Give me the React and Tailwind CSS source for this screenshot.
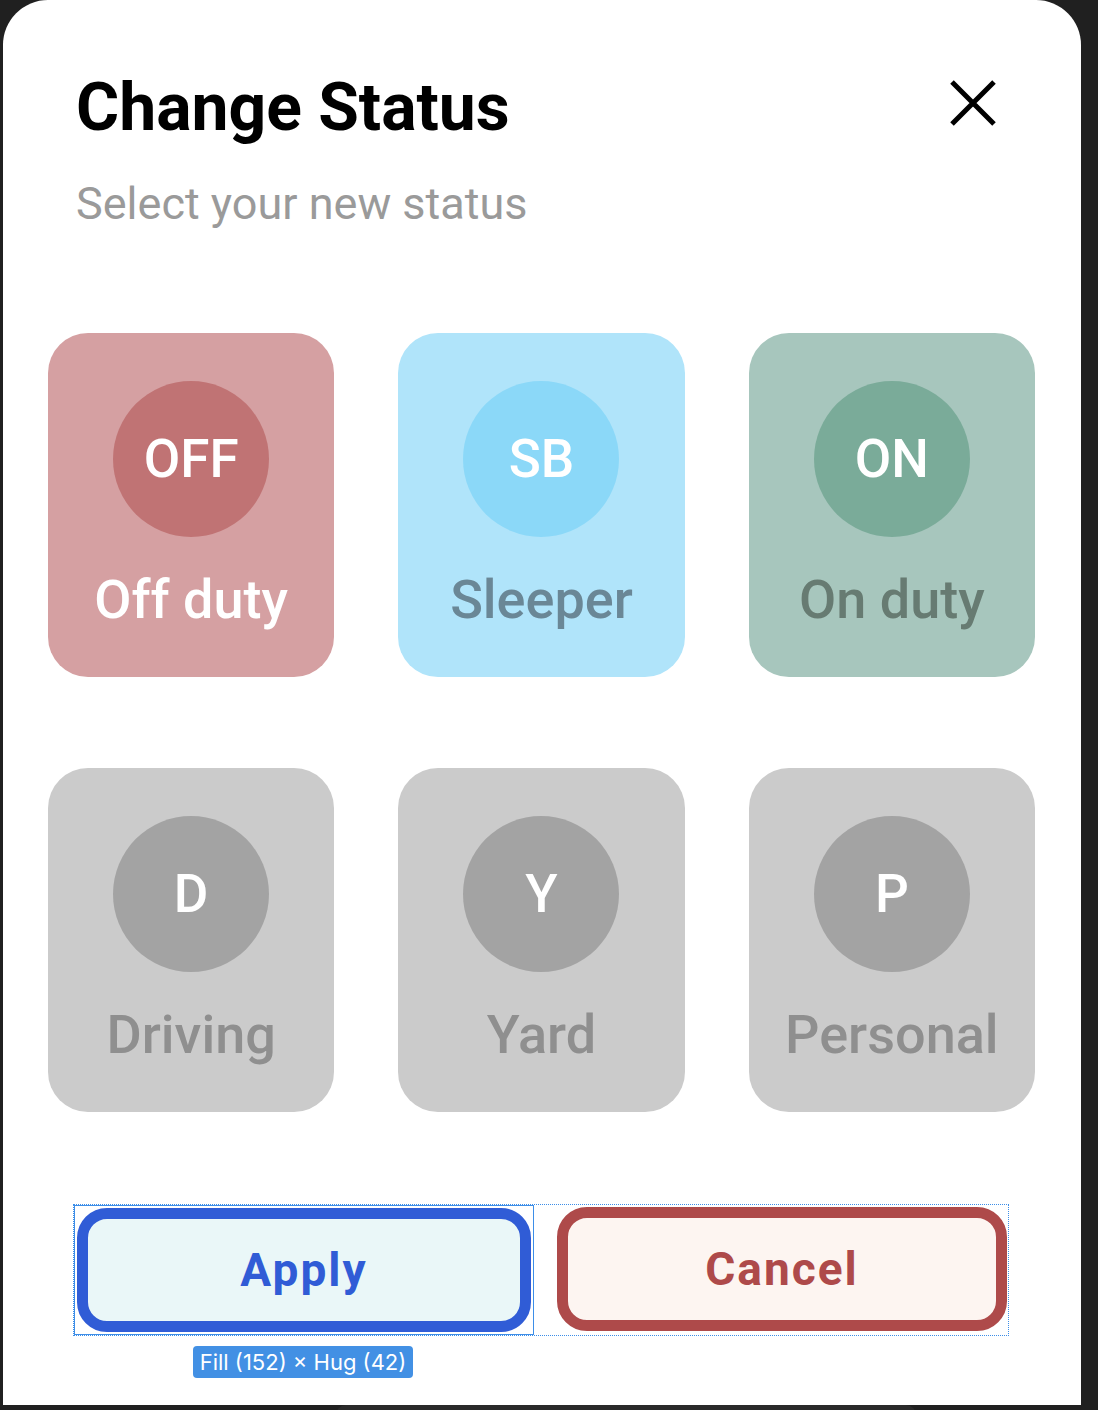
const statuses = [
  { code: "OFF", label: "Off duty", card: "bg-[#d5a0a2]", dot: "bg-[#c07374]", text: "text-white" },
  { code: "SB", label: "Sleeper", card: "bg-[#b0e4fa]", dot: "bg-[#8bd8f8]", text: "text-[#6a8796]" },
  { code: "ON", label: "On duty", card: "bg-[#a7c6bd]", dot: "bg-[#7aab99]", text: "text-[#677b72]" },
  { code: "D", label: "Driving", card: "bg-[#cbcbcb]", dot: "bg-[#a3a3a3]", text: "text-[#8f8f8f]" },
  { code: "Y", label: "Yard", card: "bg-[#cbcbcb]", dot: "bg-[#a3a3a3]", text: "text-[#8f8f8f]" },
  { code: "P", label: "Personal", card: "bg-[#cbcbcb]", dot: "bg-[#a3a3a3]", text: "text-[#8f8f8f]" },
];

function StatusCard({ s }) {
  return (
    <div className={`${s.card} h-[344px] rounded-[40px] flex flex-col items-center pt-[48px]`}>
      <div className={`${s.dot} w-[156px] h-[156px] rounded-full flex items-center justify-center text-white text-[53px] font-medium leading-none`}>
        {s.code}
      </div>
      <div className={`${s.text} mt-[37px] text-[54px] leading-[52px] font-medium`}>{s.label}</div>
    </div>
  );
}

export default function App() {
  return (
    <div className="bg-[#202020] h-[1410px] w-[1098px] overflow-hidden font-['Roboto',sans-serif]">
      <div className="ml-[3px] w-[1078px] h-[1405px] bg-white rounded-t-[45px] flex flex-col">
        {/* Header */}
        <div className="pl-[73px] pr-[85px] pt-[72px] flex justify-between items-start">
          <div>
            <h1 className="text-[66px] leading-[72px] font-bold text-black">Change Status</h1>
            <p className="mt-[34px] text-[45px] leading-[52px] text-[#9a9a9a]">Select your new status</p>
          </div>
          <svg width="46" height="46" viewBox="0 0 46 46" className="mt-[8px]">
            <path d="M2 2 L44 44 M44 2 L2 44" stroke="black" strokeWidth="5" />
          </svg>
        </div>

        {/* Status grid */}
        <div className="mt-[103px] pl-[45px] pr-[46px] grid grid-cols-3 gap-x-[64px] gap-y-[91px]">
          {statuses.map((s) => (
            <StatusCard key={s.code} s={s} />
          ))}
        </div>

        {/* Buttons */}
        <div className="relative mt-[92px] ml-[70px] w-[936px] border border-dotted border-[#3d8ee8] flex gap-[23px] pr-[1px]">
          <div className="border border-[#3d8ee8] p-[2px]">
            <button className="w-[454px] h-[124px] rounded-[30px] border-[11px] border-[#305cd6] bg-[#eaf7f8] text-[#305cd6] text-[46px] font-bold tracking-[2px]">
              Apply
            </button>
          </div>
          <button className="mt-[2px] w-[454px] h-[124px] rounded-[30px] border-[11px] border-[#ae4a4a] bg-[#fdf5f1] text-[#ae4a4a] text-[46px] font-bold tracking-[2px]">
            Cancel
          </button>
          <div className="absolute left-[119px] top-[141px] w-[220px] h-[32px] rounded-[4px] bg-[#4290e4] text-white text-[22px] font-['Inter',sans-serif] flex items-center justify-center">
            Fill (152) × Hug (42)
          </div>
        </div>
      </div>
      <div className="w-[580px] h-[10px] rounded-t-[30px] bg-[#2a2a2a] ml-[336px]"></div>
    </div>
  );
}
